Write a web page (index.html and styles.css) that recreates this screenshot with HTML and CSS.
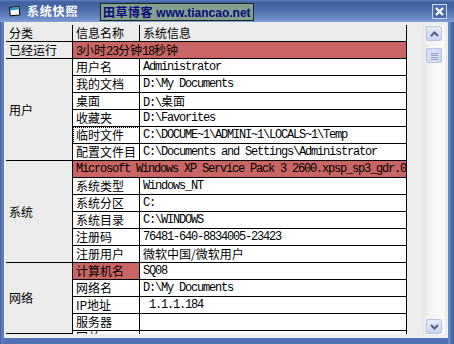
FILE: index.html
```html
<!DOCTYPE html>
<html lang="zh-CN">
<head>
    <meta charset="UTF-8">
    <title>系统快照</title>
    <link rel="stylesheet" href="styles.css">
</head>
<body>
    <div class="window">
        <div class="titlebar">
            <svg class="app-icon" width="13" height="12" viewBox="0 0 13 12">
                <path d="M1.5 2.5 L11 1.5 L11.8 10 L2.3 10.8 Z" fill="#fff" stroke="#000"/>
                <path d="M2 3 L10.5 2.1 L10.8 4.6 L2.3 5.4 Z" fill="#2a9cc4"/>
            </svg>
            <span class="title">系统快照</span>
            <span class="banner"><span class="banner-cn">田草博客</span> www.tiancao.net</span>
            <span class="close">
                <svg width="9" height="9" viewBox="0 0 9 9">
                    <path d="M1 1 L8 8 M8 1 L1 8" stroke="#fff" stroke-width="2.2"/>
                </svg>
            </span>
        </div>

        <div class="client">
            <div class="grid">
                <div class="cell fixed">分类</div>
                <div class="cell fixed">信息名称</div>
                <div class="cell fixed">系统信息</div>

                <div class="cell fixed">已经运行</div>
                <div class="cell val wide hot">3<span class="cjk">小时</span>23<span class="cjk">分钟</span>18<span class="cjk">秒钟</span></div>

                <div class="cell fixed group span6">用户</div>
                <div class="cell">用户名</div>
                <div class="cell val">Administrator</div>
                <div class="cell">我的文档</div>
                <div class="cell val">D:\My Documents</div>
                <div class="cell">桌面</div>
                <div class="cell val">D:\<span class="cjk">桌面</span></div>
                <div class="cell">收藏夹</div>
                <div class="cell val">D:\Favorites</div>
                <div class="cell focus">临时文件</div>
                <div class="cell val">C:\DOCUME~1\ADMINI~1\LOCALS~1\Temp</div>
                <div class="cell">配置文件目</div>
                <div class="cell val">C:\Documents and Settings\Administrator</div>

                <div class="cell fixed group span6">系统</div>
                <div class="cell val wide hot">Microsoft Windows XP Service Pack 3 2600.xpsp_sp3_gdr.080814-1236</div>
                <div class="cell">系统类型</div>
                <div class="cell val">Windows_NT</div>
                <div class="cell">系统分区</div>
                <div class="cell val">C:</div>
                <div class="cell">系统目录</div>
                <div class="cell val">C:\WINDOWS</div>
                <div class="cell">注册码</div>
                <div class="cell val">76481-640-8834005-23423</div>
                <div class="cell">注册用户</div>
                <div class="cell val"><span class="cjk">微软中国/微软用户</span></div>

                <div class="cell fixed group span5">网络</div>
                <div class="cell hot">计算机名</div>
                <div class="cell val">SQ08</div>
                <div class="cell">网络名</div>
                <div class="cell val">D:\My Documents</div>
                <div class="cell">IP地址</div>
                <div class="cell val"> 1.1.1.184</div>
                <div class="cell">服务器</div>
                <div class="cell val"></div>
                <div class="cell cut">网关</div>
                <div class="cell val cut"></div>
            </div>

            <div class="side">
                <div class="scrollbar">
                    <div class="sb-btn">
                        <svg width="9" height="6" viewBox="0 0 9 6"><path d="M1 5 L4.5 1.5 L8 5" fill="none" stroke="#4d5e82" stroke-width="2"/></svg>
                    </div>
                    <div class="sb-thumb">
                        <svg width="7" height="8" viewBox="0 0 7 8"><path d="M0 1.5 H7 M0 3.5 H7 M0 5.5 H7 M0 7.5 H7" stroke="#8a9ccb" stroke-width="1"/></svg>
                    </div>
                    <div class="sb-btn down">
                        <svg width="9" height="6" viewBox="0 0 9 6"><path d="M1 1 L4.5 4.5 L8 1" fill="none" stroke="#4d5e82" stroke-width="2"/></svg>
                    </div>
                </div>
            </div>
        </div>
    </div>
</body>
</html>
```

FILE: styles.css
```css
body {
    margin: 0;
    font-family: "Noto Sans CJK SC", sans-serif;
}
.window {
    width: 454px;
    height: 344px;
    display: flex;
    flex-direction: column;
    background: linear-gradient(to right, #3b5c9e, #6585c6 2px, #5071b4 4px, #5071b4 448px, #7d99d2 449px, #4d6eb1 451px, #3b5c9e);
}
.titlebar {
    height: 22px;
    flex-shrink: 0;
    display: flex;
    align-items: center;
    padding-left: 8px;
    background: linear-gradient(#6282c2 0, #3f5f9f 2px, #4767a7 8px, #6e8cc6 19px, #86a1d6 22px);
}
.app-icon {
    margin-right: 6px;
}
.title {
    width: 73px;
    color: #fff;
    font-weight: bold;
    font-size: 12px;
    letter-spacing: 0.8px;
    line-height: 22px;
}
.banner {
    align-self: flex-start;
    margin-top: 3px;
    box-sizing: border-box;
    width: 154px;
    height: 18px;
    padding-left: 2px;
    border: 1px solid #1a261e;
    background: #829f8f;
    color: #0c0c7c;
    font-family: "Liberation Sans", "Noto Sans CJK SC", sans-serif;
    font-weight: bold;
    font-size: 12px;
    line-height: 16px;
    white-space: nowrap;
}
.banner-cn {
    font-family: "Noto Sans CJK SC", sans-serif;
    letter-spacing: 0.5px;
}
.close {
    margin-left: auto;
    margin-right: 7px;
    box-sizing: border-box;
    width: 15px;
    height: 15px;
    border: 1px solid #c9d6f2;
    background: #4c6cab;
    display: flex;
    align-items: center;
    justify-content: center;
}
.client {
    flex: 1;
    margin: 0 6px 6px 4px;
    padding: 3px 0 0 1px;
    border-left: 1px solid #f7f7f7;
    border-bottom: 1px solid #f7f7f7;
    background: #ededed;
    display: flex;
    align-items: flex-start;
}
.grid {
    width: 401px;
    height: 309px;
    display: grid;
    grid-template-columns: 67px 67px 267px;
    grid-template-rows: repeat(18, 17px) 3px;
    overflow: hidden;
    background: #fff;
    font-size: 12px;
    color: #000;
}
.cell {
    box-sizing: border-box;
    border-right: 1px solid #000;
    border-bottom: 1px solid #000;
    padding-left: 3px;
    line-height: 16px;
    white-space: pre;
    overflow: hidden;
    background: #fff;
}
.fixed {
    background: #ebebeb;
}
.group {
    display: flex;
    align-items: center;
}
.span6 {
    grid-row: span 6;
}
.span5 {
    grid-row: span 5;
}
.wide {
    grid-column: span 2;
}
.hot {
    background: #c96565;
}
.focus {
    outline: 1px dotted #000;
    outline-offset: -1px;
}
.val {
    font-family: "Liberation Mono", "Noto Sans CJK SC", monospace;
    letter-spacing: -1.2px;
}
.val .cjk {
    font-family: "Noto Sans CJK SC", sans-serif;
    letter-spacing: 0;
}
.cut {
    border-bottom: none;
    line-height: 11px;
}
.side {
    flex: 1;
    align-self: stretch;
    display: flex;
}
.scrollbar {
    margin-left: 15px;
    width: 25px;
    height: 310px;
    box-sizing: border-box;
    padding: 1px 0 0 4px;
    display: flex;
    flex-direction: column;
    background: linear-gradient(to right, #e4e4e4, #f3f3f3 30%, #fbfbfb 85%, #e8e8e8);
}
.sb-btn,
.sb-thumb {
    box-sizing: border-box;
    width: 16px;
    height: 15px;
    border: 1px solid #b6c4e6;
    border-radius: 2px;
    background: linear-gradient(#e6ecfb, #c8d4f1);
    display: flex;
    align-items: center;
    justify-content: center;
}
.sb-thumb {
    margin-top: 7px;
    background: linear-gradient(to right, #cfdaf4, #dfe6f8 50%, #c9d5f1);
}
.down {
    margin-top: auto;
    margin-bottom: 1px;
}
```
